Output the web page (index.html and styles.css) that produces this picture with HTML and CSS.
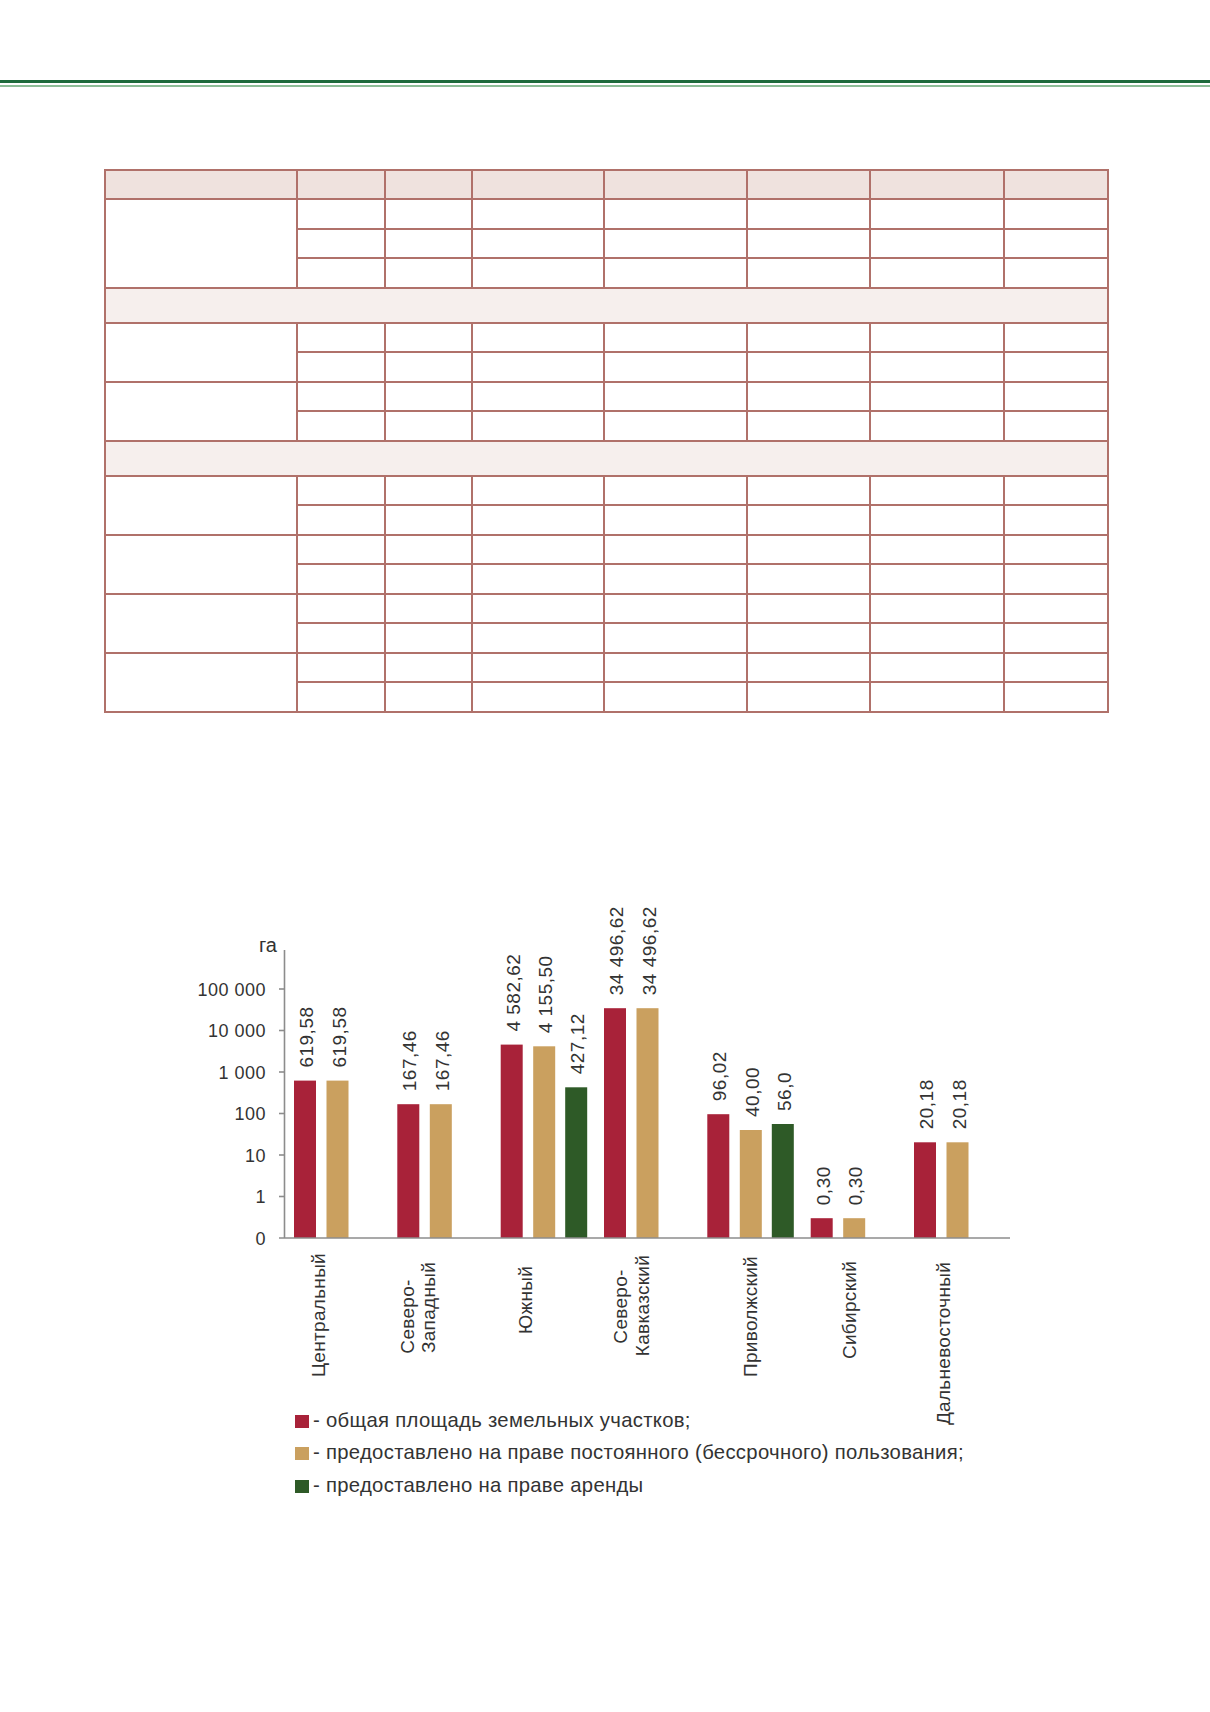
FILE: index.html
```html
<!DOCTYPE html>
<html lang="ru">
<head>
<meta charset="utf-8">
<title>Земельные участки</title>
<link rel="stylesheet" href="styles.css">
</head>
<body>
<div class="page">
  <div class="rule"><div class="rule-thick"></div><div class="rule-thin"></div></div>

  <table class="data">
    <colgroup>
      <col class="c1"><col class="c2"><col class="c3"><col class="c4"><col class="c5"><col class="c6"><col class="c7"><col class="c8">
    </colgroup>
    <tr class="head"><td></td><td></td><td></td><td></td><td></td><td></td><td></td><td></td></tr>
    <tr><td rowspan="3"></td><td></td><td></td><td></td><td></td><td></td><td></td><td></td></tr>
    <tr><td></td><td></td><td></td><td></td><td></td><td></td><td></td></tr>
    <tr><td></td><td></td><td></td><td></td><td></td><td></td><td></td></tr>
    <tr class="section"><td colspan="8"></td></tr>
    <tr><td rowspan="2"></td><td></td><td></td><td></td><td></td><td></td><td></td><td></td></tr>
    <tr><td></td><td></td><td></td><td></td><td></td><td></td><td></td></tr>
    <tr><td rowspan="2"></td><td></td><td></td><td></td><td></td><td></td><td></td><td></td></tr>
    <tr><td></td><td></td><td></td><td></td><td></td><td></td><td></td></tr>
    <tr class="section"><td colspan="8"></td></tr>
    <tr><td rowspan="2"></td><td></td><td></td><td></td><td></td><td></td><td></td><td></td></tr>
    <tr><td></td><td></td><td></td><td></td><td></td><td></td><td></td></tr>
    <tr><td rowspan="2"></td><td></td><td></td><td></td><td></td><td></td><td></td><td></td></tr>
    <tr><td></td><td></td><td></td><td></td><td></td><td></td><td></td></tr>
    <tr><td rowspan="2"></td><td></td><td></td><td></td><td></td><td></td><td></td><td></td></tr>
    <tr><td></td><td></td><td></td><td></td><td></td><td></td><td></td></tr>
    <tr><td rowspan="2"></td><td></td><td></td><td></td><td></td><td></td><td></td><td></td></tr>
    <tr><td></td><td></td><td></td><td></td><td></td><td></td><td></td></tr>
  </table>

  <svg class="chart" viewBox="0 880 1210 640" width="1210" height="640" xmlns="http://www.w3.org/2000/svg">
    <!-- axis unit -->
    <text class="unit" x="277" y="952">га</text>

    <!-- tick labels -->
    <g class="ticklabels">
      <text x="266" y="995.5">100 000</text>
      <text x="266" y="1037">10 000</text>
      <text x="266" y="1078.5">1 000</text>
      <text x="266" y="1120">100</text>
      <text x="266" y="1161.5">10</text>
      <text x="266" y="1203">1</text>
      <text x="266" y="1244.5">0</text>
    </g>

    <!-- bars -->
    <g class="bars">
      <rect class="red" x="294" y="1080.6" width="22" height="157.4"/>
      <rect class="tan" x="326.5" y="1080.6" width="22" height="157.4"/>

      <rect class="red" x="397.3" y="1104.2" width="22" height="133.8"/>
      <rect class="tan" x="429.8" y="1104.2" width="22" height="133.8"/>

      <rect class="red" x="500.7" y="1044.6" width="22" height="193.4"/>
      <rect class="tan" x="533.2" y="1046.3" width="22" height="191.7"/>
      <rect class="green" x="565.2" y="1087.3" width="22" height="150.7"/>

      <rect class="red" x="604" y="1008.2" width="22" height="229.8"/>
      <rect class="tan" x="636.5" y="1008.2" width="22" height="229.8"/>

      <rect class="red" x="707.3" y="1114.2" width="22" height="123.8"/>
      <rect class="tan" x="739.8" y="1130" width="22" height="108"/>
      <rect class="green" x="771.8" y="1124" width="22" height="114"/>

      <rect class="red" x="810.7" y="1218.2" width="22" height="19.8"/>
      <rect class="tan" x="843.2" y="1218.2" width="22" height="19.8"/>

      <rect class="red" x="914" y="1142.3" width="22" height="95.7"/>
      <rect class="tan" x="946.5" y="1142.3" width="22" height="95.7"/>
    </g>

    <!-- axes -->
    <g class="axis">
      <line x1="284.5" y1="950" x2="284.5" y2="1238"/>
      <line x1="279" y1="1238" x2="1010" y2="1238"/>
      <line x1="279" y1="989" x2="284.5" y2="989"/>
      <line x1="279" y1="1030.5" x2="284.5" y2="1030.5"/>
      <line x1="279" y1="1072" x2="284.5" y2="1072"/>
      <line x1="279" y1="1113.5" x2="284.5" y2="1113.5"/>
      <line x1="279" y1="1155" x2="284.5" y2="1155"/>
      <line x1="279" y1="1196.5" x2="284.5" y2="1196.5"/>
    </g>

    <!-- value labels -->
    <g class="values">
      <text transform="translate(313,1067.6) rotate(-90)">619,58</text>
      <text transform="translate(345.5,1067.6) rotate(-90)">619,58</text>
      <text transform="translate(416.3,1091.2) rotate(-90)">167,46</text>
      <text transform="translate(448.8,1091.2) rotate(-90)">167,46</text>
      <text transform="translate(519.7,1031.6) rotate(-90)">4 582,62</text>
      <text transform="translate(552.2,1033.3) rotate(-90)">4 155,50</text>
      <text transform="translate(584.2,1074.3) rotate(-90)">427,12</text>
      <text transform="translate(623,995.2) rotate(-90)">34 496,62</text>
      <text transform="translate(655.5,995.2) rotate(-90)">34 496,62</text>
      <text transform="translate(726.3,1101.2) rotate(-90)">96,02</text>
      <text transform="translate(758.8,1117) rotate(-90)">40,00</text>
      <text transform="translate(790.8,1111) rotate(-90)">56,0</text>
      <text transform="translate(829.7,1205.2) rotate(-90)">0,30</text>
      <text transform="translate(862.2,1205.2) rotate(-90)">0,30</text>
      <text transform="translate(933,1129.3) rotate(-90)">20,18</text>
      <text transform="translate(965.5,1129.3) rotate(-90)">20,18</text>
    </g>

    <!-- category labels -->
    <g class="cats">
      <text transform="translate(325.3,1315) rotate(-90)">Центральный</text>
      <text transform="translate(413.6,1316.5) rotate(-90)">Северо-</text>
      <text transform="translate(435.3,1307.5) rotate(-90)">Западный</text>
      <text transform="translate(532,1300) rotate(-90)">Южный</text>
      <text transform="translate(627,1306.5) rotate(-90)">Северо-</text>
      <text transform="translate(648.6,1305.5) rotate(-90)">Кавказский</text>
      <text transform="translate(757,1316.5) rotate(-90)">Приволжский</text>
      <text transform="translate(856.3,1310) rotate(-90)">Сибирский</text>
      <text transform="translate(950.3,1343.5) rotate(-90)">Дальневосточный</text>
    </g>

    <!-- legend -->
    <g class="legend">
      <rect class="red" x="295" y="1415" width="14" height="13"/>
      <text x="313" y="1427">- общая площадь земельных участков;</text>
      <rect class="tan" x="295" y="1447" width="14" height="13"/>
      <text x="313" y="1459">- предоставлено на праве постоянного (бессрочного) пользования;</text>
      <rect class="green" x="295" y="1480" width="14" height="13"/>
      <text x="313" y="1492">- предоставлено на праве аренды</text>
    </g>
  </svg>
</div>
</body>
</html>
```
FILE: styles.css
```css
html, body {
  margin: 0;
  padding: 0;
  background: #ffffff;
}

body {
  font-family: "Liberation Sans", Arial, sans-serif;
  color: #333333;
}

.page {
  width: 1210px;
}

.rule {
  padding-top: 80px;
}

.rule-thick {
  height: 3px;
  background: #1e6a3c;
}

.rule-thin {
  height: 2px;
  margin-top: 2px;
  background: #8dbd98;
}

.data {
  margin: 82px 0 0 104px;
  width: 1003px;
  border-collapse: collapse;
  table-layout: fixed;
}

.data td {
  border: 2px solid #b0716a;
  padding: 0;
  background: #ffffff;
}

.data tr {
  height: 29.5px;
}

.data tr.head {
  height: 29px;
}

.data tr.head td {
  background: #efe2de;
}

.data tr.section {
  height: 35px;
}

.data tr.section td {
  background: #f6efed;
}

.c1 { width: 192px; }
.c2 { width: 88px; }
.c3 { width: 87px; }
.c4 { width: 132px; }
.c5 { width: 143px; }
.c6 { width: 123px; }
.c7 { width: 134px; }
.c8 { width: 104px; }

.chart {
  display: block;
  margin-top: 167px;
}

.chart text {
  font-family: "Liberation Sans", Arial, sans-serif;
  fill: #333333;
}

.unit {
  font-size: 20px;
  text-anchor: end;
}

.ticklabels text {
  font-size: 18px;
  letter-spacing: 0.5px;
  text-anchor: end;
}

.values text {
  font-size: 19px;
  letter-spacing: 0.5px;
}

.cats text {
  font-size: 19px;
  letter-spacing: 0.3px;
  text-anchor: middle;
}

.legend text {
  font-size: 20.3px;
  letter-spacing: 0.3px;
}

.red { fill: #a82239; }
.tan { fill: #caa05f; }
.green { fill: #2e5a27; }

.axis line {
  stroke: #8c8c8c;
  stroke-width: 1.6;
}
```
